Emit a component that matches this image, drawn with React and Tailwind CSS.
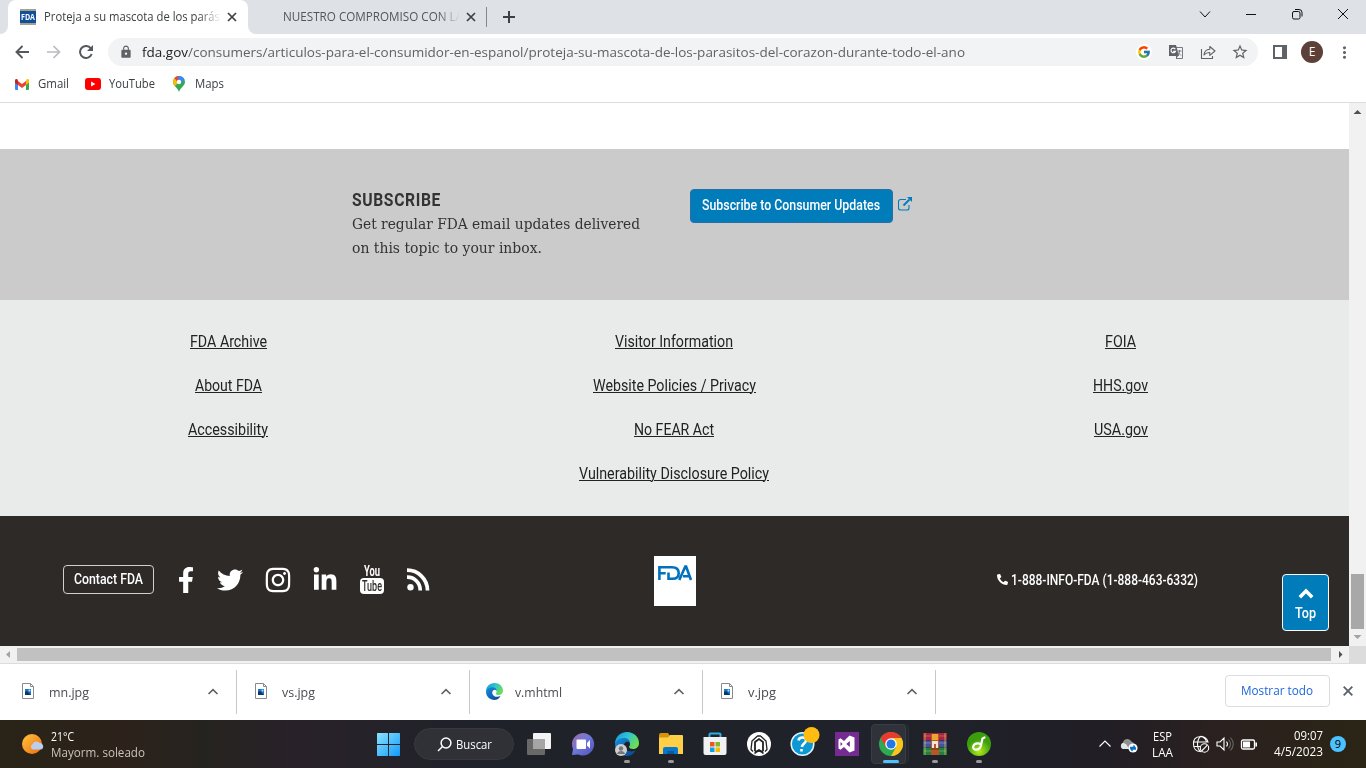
import React, { useLayoutEffect, useRef } from "react";
import { FaFacebookF, FaTwitter, FaInstagram, FaLinkedinIn, FaPhoneAlt } from "react-icons/fa";
import { MdLock, MdStarBorder, MdMoreVert } from "react-icons/md";
import { FcGoogle } from "react-icons/fc";

/* Single line of text squeezed or stretched to an exact width. */
function Fit({ w, className = "", textClass = "", children }) {
  const inner = useRef(null);
  useLayoutEffect(() => {
    const el = inner.current;
    el.style.transform = "none";
    const natural = el.getBoundingClientRect().width;
    if (natural) el.style.transform = `scaleX(${w / natural})`;
  }, [w, children]);
  return (
    <span className={`block shrink-0 whitespace-nowrap ${className}`} style={{ width: w }}>
      <span ref={inner} className={`inline-block origin-left ${textClass}`}>{children}</span>
    </span>
  );
}

function Cross({ className }) {
  return (
    <svg className={`h-[10px] w-[10px] shrink-0 ${className}`} viewBox="0 0 10 10" stroke="#3c4043" strokeWidth="1.700">
      <path d="M1 1l8 8M9 1L1 9" />
    </svg>
  );
}

function Tabs() {
  return (
    <div className="flex h-[34px] items-stretch bg-[#dee1e6] pl-2 text-[#3c4043]">
      <div className="relative flex w-[240px] items-center rounded-t-lg bg-white pl-3">
        <svg className="absolute bottom-0 -left-2" width="8" height="8"><path d="M8 0v8H0a8 8 0 0 0 8-8z" fill="#fff" /></svg>
        <svg className="absolute -right-2 bottom-0" width="8" height="8"><path d="M0 0v8h8a8 8 0 0 1-8-8z" fill="#fff" /></svg>
        <div className="flex h-4 w-4 flex-col items-center justify-center border-t-2 border-b-2 border-[#a5a28c] bg-[#10509b] text-[8px] leading-none font-bold text-white">
          <Fit w={14}>FDA</Fit>
        </div>
        <div className="ml-2 w-[177px] overflow-hidden [mask-image:linear-gradient(to_right,#000_155px,transparent_177px)]">
          <Fit w={176} className="text-[12px] leading-5">Proteja a su mascota de los parás</Fit>
        </div>
        <Cross className="ml-1.5" />
      </div>
      <div className="flex w-[238px] items-center pl-[35px]">
        <div className="w-[182px] [mask-image:linear-gradient(to_right,#000_155px,transparent_177px)]">
          <Fit w={180} className="text-[12px] leading-5 text-[#54555c]">NUESTRO COMPROMISO CON LA</Fit>
        </div>
        <Cross className="ml-px" />
      </div>
      <div className="mt-[7px] h-5 w-px bg-[#85888d]" />
      <svg className="mt-[11px] ml-4" width="12" height="12" viewBox="0 0 12 12" stroke="#3c4043" strokeWidth="2"><path d="M6 0v12M0 6h12" /></svg>
      <svg className="ml-auto h-[34px] w-[176px] shrink-0" viewBox="1190 0 176 34" fill="none" stroke="#111" strokeWidth="1">
        <path d="M1200 11.5l5 5.5 5-5.500" />
        <path d="M1246 14.500h10" />
        <rect x="1292.500" y="11.500" width="7.500" height="7.500" rx="1.500" />
        <path d="M1295 9.500h4a3 3 0 0 1 3 3v4" />
        <path d="M1338 9l10 10M1348 9l-10 10" />
      </svg>
    </div>
  );
}

function Toolbar() {
  return (
    <div className="flex h-9 items-center bg-white pl-[15px] text-[#5f6368]">
      <svg width="14" height="14" viewBox="0 0 14 14" fill="none" stroke="#55595e" strokeWidth="1.900"><path d="M14 7H1.500M7.500 1L1.500 7l6 6" /></svg>
      <svg className="ml-[18px]" width="14" height="14" viewBox="0 0 14 14" fill="none" stroke="#b9bbbe" strokeWidth="1.700"><path d="M0 7h12.500M6.500 1l6 6-6 6" /></svg>
      <svg className="ml-[18px]" width="14" height="14" viewBox="0 0 14 14"><path d="M11.800 3.300A6 6 0 1 0 12.700 9" fill="none" stroke="#55595e" strokeWidth="2" /><path d="M14 0v6H8z" fill="#55595e" /></svg>
      <div className="ml-[15px] flex h-7 w-[1150px] items-center rounded-full bg-[#f1f3f4] pl-[11px] text-[13.5px]">
        <MdLock className="mr-[9px] h-[14px] w-[14px]" />
        <Fit w={46} className="leading-7 text-[#202124]">fda.gov</Fit>
        <Fit w={777} className="leading-7">/consumers/articulos-para-el-consumidor-en-espanol/proteja-su-mascota-de-los-parasitos-del-corazon-durante-todo-el-ano</Fit>
        <div className="ml-[171px] flex h-4 w-4 items-center justify-center rounded-full bg-white"><FcGoogle className="h-[14px] w-[14px]" /></div>
        <svg className="ml-4 h-4 w-4" viewBox="0 0 16 16">
          <path d="M5 3.500h9.500v11H8" fill="none" stroke="#777b80" />
          <path d="M1 1h7l3 11H1z" fill="#5f6368" />
          <path d="M7.300 5.200a2.300 2.300 0 1 0 .1 2.200H5.200" fill="none" stroke="#fff" strokeWidth="1.100" />
          <path d="M9.500 7h4M11.500 6v1c0 2-1 3.500-2 4.500M10 8.500l3 3" fill="none" stroke="#777b80" />
          <path d="M8 12h2l-2 3z" fill="#5f6368" />
        </svg>
        <svg className="ml-4 h-4 w-4" viewBox="0 0 16 16" fill="none" stroke="#5f6368" strokeWidth="1.100">
          <path d="M1.500 5v9.500h11V12" /><path d="M4 11c.4-3.800 2.500-5.600 5.800-5.700V2.500L15 7l-5.200 4.300V8.500C7.200 8.400 5.500 9.200 4 11z" strokeLinejoin="round" />
        </svg>
        <MdStarBorder className="ml-[15px] h-[18px] w-[18px]" />
      </div>
      <svg className="ml-[15px] h-[14px] w-[14px]" viewBox="0 0 14 14"><path d="M0 0h14v14H0zM2 2v10h7V2z" fill="#5f6368" fillRule="evenodd" /></svg>
      <div className="ml-[14px] flex h-[22px] w-[22px] items-center justify-center rounded-full bg-[#5d4037] text-[12px] text-white">E</div>
      <MdMoreVert className="ml-3 h-[19px] w-[19px]" />
    </div>
  );
}

function Bookmarks() {
  return (
    <div className="flex h-[33px] items-center border-b border-[#dadce0] bg-white pb-1 pl-[15px] text-[12px] text-[#3c4043]">
      <svg width="14" height="11" viewBox="0 0 14 11">
        <path d="M0 1.500V10q0 1 1 1h2V5z" fill="#4285f4" /><path d="M11 5v6h2q1 0 1-1V1.500z" fill="#34a853" />
        <path d="M11 2v4l3-2.300V1.500C14 0 12.500-.5 11.500.4z" fill="#fbbc04" /><path d="M3 2v4l4 3 4-3V2L7 5z" fill="#ea4335" />
        <path d="M0 1.500v2.200L3 6V2L2.500.4C1.500-.5 0 0 0 1.500z" fill="#c5221f" />
      </svg>
      <Fit w={31} className="ml-[9px]">Gmail</Fit>
      <svg className="ml-[16px]" width="16" height="12" viewBox="0 0 17 12" preserveAspectRatio="none"><rect width="17" height="12" rx="3" fill="#f00" /><path d="M6.500 3.500v5l4.500-2.500z" fill="#fff" /></svg>
      <Fit w={46} className="ml-2">YouTube</Fit>
      <svg className="ml-[18px]" width="12" height="16" viewBox="0 0 12 16">
        <path d="M6 0a6 6 0 0 1 6 6c0 4-4.500 5-6 10C4.500 11 0 10 0 6a6 6 0 0 1 6-6z" fill="#34a853" />
        <path d="M0 6q0-2 1.400-3.900L6 6 2 10Q0 8 0 6z" fill="#fbbc04" />
        <path d="M1.400 2.100A6 6 0 0 1 6 0v3L3.800 5z" fill="#ea4335" /><path d="M6 0a6 6 0 0 1 5.500 3.500L8 7 4.500 3z" fill="#4285f4" /><circle cx="6" cy="6" r="2.200" fill="#fff" />
      </svg>
      <Fit w={29} className="ml-[10px]">Maps</Fit>
    </div>
  );
}

const LINKS = [
  [["FDA Archive", 77], ["About FDA", 67], ["Accessibility", 80]],
  [["Visitor Information", 118], ["Website Policies / Privacy", 163], ["No FEAR Act", 80], ["Vulnerability Disclosure Policy", 190]],
  [["FOIA", 31], ["HHS.gov", 55], ["USA.gov", 54]],
];

function Page() {
  return (
    <div className="relative flex w-[1349px] flex-col font-['Roboto',sans-serif]">
      <div className="h-[46px] bg-white" />
      <section className="flex h-[151px] bg-[#cbcbcb] pt-[39px] pl-[352px] text-[#333]">
        <div className="w-[338px]">
          <Fit w={89} className="h-6 text-[18px] leading-6 font-bold" textClass="tracking-[.04em]">SUBSCRIBE</Fit>
          <Fit w={288} className="h-6 font-['DejaVu_Serif',serif] text-[15.5px] leading-6">Get regular FDA email updates delivered</Fit>
          <Fit w={190} className="h-6 font-['DejaVu_Serif',serif] text-[15.5px] leading-6">on this topic to your inbox.</Fit>
        </div>
        <div className="mt-px flex h-[34px] w-[203px] items-center rounded-[4px] border border-[#2a6ea6] bg-[#007cba] pb-px pl-[11px] text-[14px] font-medium text-white">
          <Fit w={178}>Subscribe to Consumer Updates</Fit>
        </div>
        <svg className="mt-[9px] ml-[5px] h-[14px] w-[14px]" viewBox="0 0 14 14" fill="none" stroke="#007cba" strokeWidth="1.100">
          <path d="M8 2.500H2.500a2 2 0 0 0-2 2v6.500a2 2 0 0 0 2 2H9a2 2 0 0 0 2-2V8" /><path d="M5.500 8.500l6-6" strokeWidth="1.800" /><path d="M9 0h5v5z" fill="#007cba" stroke="none" />
        </svg>
      </section>
      <nav className="grid h-[216px] grid-cols-3 bg-[#e9ebeb] px-[5px] pt-[30px] text-[16px] text-[#222]">
        {LINKS.map((col, i) => (
          <div key={i} className="flex flex-col items-center gap-5">
            {col.map(([t, w]) => <Fit key={t} w={w} className="h-6 leading-6" textClass="underline decoration-1 underline-offset-1">{t}</Fit>)}
          </div>
        ))}
      </nav>
      <footer className="flex h-[130px] items-center bg-[#2e2a28] pl-[63px] text-white">
        <div className="-mt-[3px] flex w-[591px] items-center">
          <div className="flex h-[29px] w-[91px] items-center justify-center rounded-[4px] border border-[#d0d0d0] text-[14px] font-medium"><Fit w={69}>Contact FDA</Fit></div>
          <FaFacebookF className="ml-[19px] h-[26px] w-[26px]" />
          <FaTwitter className="ml-[18px] h-[26px] w-[26px]" />
          <FaInstagram className="ml-[21px] h-[28px] w-[28px]" />
          <FaLinkedinIn className="ml-[20px] h-[26px] w-[26px]" />
          <div className="ml-[22px] flex h-[29px] w-6 flex-col items-center font-bold">
            <Fit w={16} className="h-[13px] text-[15px] leading-[12px]">You</Fit>
            <div className="flex h-4 w-6 items-center justify-center rounded-[4px] bg-white font-medium text-[#2e2a28]"><Fit w={20} className="text-[14px] leading-4">Tube</Fit></div>
          </div>
          <svg className="ml-[23px]" width="23" height="23" viewBox="0 0 23 23" fill="none" stroke="#fff" strokeWidth="3.700"><circle cx="3.500" cy="19.300" r="3.200" fill="#fff" stroke="none" /><path d="M0 9.200A12.800 12.800 0 0 1 13.200 22.500M0 2.200A20.300 20.300 0 0 1 20.500 22.500" /></svg>
        </div>
        <svg className="h-[50px] w-[42px] bg-white" viewBox="0 0 42 50" fill="none" stroke="#0071bc" strokeWidth="2.600">
          <path d="M5.400 24V11.300H18c5 0 6.700 2.400 6.700 5.900S23 22.800 18.500 22.800h-4v-6.300M5.400 17.200h6.300M25.300 24l6-13.500h.8l4.900 13.500M29 20.200h6" />
        </svg>
        <FaPhoneAlt className="-mt-1 ml-[301px] h-[11px] w-[11px] -scale-x-100 rotate-90" />
        <Fit w={187} className="-mt-[2px] ml-[3px] text-[14px] font-medium">1-888-INFO-FDA (1-888-463-6332)</Fit>
      </footer>
      <button className="absolute top-[471px] left-[1282px] flex h-[57px] w-[47px] flex-col items-center rounded-[4px] border border-white bg-[#007cba] pt-[13px] text-white">
        <svg width="16" height="11" viewBox="0 0 16 11" fill="none" stroke="#fff" strokeWidth="3.500"><path d="M1.800 9.200L8 3l6.200 6.200" /></svg>
        <Fit w={21} className="mt-1 text-[14px] leading-5 font-medium">Top</Fit>
      </button>
    </div>
  );
}

function ShelfItem({ name, w, edge }) {
  return (
    <div className="my-1.5 flex w-[233px] items-center border-r border-[#c8c8c8] first:w-[237px] first:pl-1">
      <div className="ml-[15px] flex w-[18px] items-center justify-center pb-0.5">
        {edge ? <EdgeIcon size={17} /> : (
          <svg width="12" height="16" viewBox="0 0 12 16"><path d="M.5.500h8l3 3v12H.5z" fill="#fff" stroke="#8a8a8a" /><path d="M8.500.500v3h3" fill="none" stroke="#8a8a8a" /><rect x="3" y="6" width="6" height="6" fill="#1976c9" /><path d="M3 12V9l2-1 4 4z" fill="#0b3763" /><circle cx="7.500" cy="7.500" r="1" fill="#c2e6ff" /></svg>
        )}
      </div>
      <Fit w={w} className="ml-3 pt-px text-[13px] text-[#4b4b52]">{name}</Fit>
      <svg className="mr-[17px] ml-auto" width="12" height="8" viewBox="0 0 12 8" fill="none" stroke="#5f6368" strokeWidth="1.700"><path d="M1.500 6L6 1.700 10.500 6" /></svg>
    </div>
  );
}

function EdgeIcon({ size, person }) {
  return (
    <svg width={size} height={size} viewBox="0 0 24 24">
      <defs>
        <linearGradient id="edgeTop" x1="0" y1="0" x2="1" y2=".5"><stop stopColor="#168fdd" /><stop offset=".5" stopColor="#2cc3d4" /><stop offset="1" stopColor="#6cdd55" /></linearGradient>
        <linearGradient id="edgeBase" x1="0" y1="0" x2="1" y2="1"><stop stopColor="#168fdd" /><stop offset="1" stopColor="#07458f" /></linearGradient>
      </defs>
      <path d="M0 12C0 5 5 0 12 0s12 5 12 11c0 4-3 6-6 6-2 0-4-.8-4-2 0-.8 1-1 1-3 0-2.500-2.500-4-6-4S1 10 0 12z" fill="url(#edgeTop)" />
      <path d="M0 12c1-4 5-6 9-6 3.500 0 6 2 6 5-1-1.500-3-1.500-4-1-2 1-2.500 3-2 5 1 4 6 5.500 11.500 3.500C18 23 15 24 12 24 5 24 0 19 0 12z" fill="url(#edgeBase)" />
      {person && <g><circle cx="6" cy="18" r="6" fill="#d0d0d0" /><circle cx="6" cy="16.500" r="2.200" fill="#777" /><path d="M2 22c.5-4 7.500-4 8 0z" fill="#777" /></g>}
    </svg>
  );
}

function App24({ children, running }) {
  return (
    <div className="relative flex h-12 w-11 items-center justify-center">
      {children}
      {running && <div className="absolute bottom-[5px] h-[3px] w-1.5 rounded-full bg-[#999]" />}
    </div>
  );
}

function Taskbar() {
  return (
    <div className="flex h-12 items-center bg-[linear-gradient(to_right,#292417_0%,#2c221b_9%,#25231f_15%,#28212a_22%,#202229_34%,#1f222a_65%,#211e26_80%,#2b211f_90%,#2a2515_100%)] pl-[21px] text-white">
      <svg width="24" height="24" viewBox="0 0 24 24">
        <defs><linearGradient id="sun" x1="0" y1="0" x2="1" y2="1"><stop stopColor="#ffc83d" /><stop offset="1" stopColor="#ee6a12" /></linearGradient></defs>
        <circle cx="11" cy="12" r="10" fill="url(#sun)" /><path d="M12 17.500a3 3 0 0 1-.3-5.600 4 4 0 0 1 7-.8A3.300 3.300 0 0 1 20 17.500z" fill="#bccdf2" />
      </svg>
      <div className="ml-[6px] w-[326px] pt-px text-[12px] leading-4">
        <Fit w={23} className="h-4">21°C</Fit>
        <Fit w={94} className="h-4 text-[#c7c3be]">Mayorm. soleado</Fit>
      </div>
      <svg className="-ml-px h-6 w-6" viewBox="0 0 24 24">
        <defs><linearGradient id="win" x1="0" y1="0" x2="1" y2="1"><stop stopColor="#8be3ff" /><stop offset="1" stopColor="#119af8" /></linearGradient></defs>
        <path d="M1.500 1H12v11H1V1.500zM13 1h10.500l.5.500V12H13zM1 13h11v11H1.500l-.5-.5zM13 13h11v10.500l-.5.500H13z" fill="url(#win)" />
      </svg>
      <div className="ml-[14px] flex h-8 w-[100px] items-center rounded-full border border-[#38383e] bg-[#303037] pl-[22px]">
        <svg width="15" height="15" viewBox="0 0 15 15" fill="none" stroke="#fff" strokeWidth="1.500"><circle cx="9" cy="6" r="4.900" /><path d="M5.500 9.500L1 14" /></svg>
        <Fit w={36} className="ml-1 pt-px text-[12px] font-medium">Buscar</Fit>
      </div>
      <div className="ml-[3px] flex">
        <App24>
          <svg width="24" height="24" viewBox="0 0 24 24"><rect x="6" y="1" width="18" height="16" rx="1" fill="#f3f3f3" /><rect x="0" y="7" width="18" height="16" rx="1" fill="#686868" /><rect x="6" y="7" width="12" height="10" fill="#a5a5a5" /></svg>
        </App24>
        <App24>
          <svg width="24" height="24" viewBox="0 0 24 24"><defs><linearGradient id="chat" x1="0" y1="0" x2="1" y2="1"><stop stopColor="#a66aa0" /><stop offset=".45" stopColor="#7078da" /><stop offset="1" stopColor="#4f50bd" /></linearGradient></defs><path d="M12 1a11.300 11.300 0 1 1-5 21.500L1 23l1-6A11.300 11.300 0 0 1 12 1z" fill="url(#chat)" /><rect x="5.500" y="7.500" width="9.500" height="9.500" rx="1" fill="#fff" /><path d="M16 11l3-3v8.500l-3-3z" fill="#fff" /></svg>
        </App24>
        <App24 running><EdgeIcon size={24} person /></App24>
        <App24 running>
          <svg width="24" height="22" viewBox="0 0 24 22"><path d="M0 2q0-2 2-2h7l2 3v5H0z" fill="#d99209" /><path d="M0 4.500h9L11 2h12q1 0 1 1v18H0z" fill="#ffcf48" /><path d="M4 21v-5q0-2 2-2h11q2 0 2 2v5z" fill="#0878cf" /><path d="M8 21v-3h7v3z" fill="#075aa2" /></svg>
        </App24>
        <App24>
          <svg width="24" height="24" viewBox="0 0 24 24"><path d="M6.500 6V2.500q0-1 1-1h9q1 0 1 1V6" fill="none" stroke="#29aee6" strokeWidth="2" /><path d="M.5 5h23v16q0 2-2 2h-19q-2 0-2-2z" fill="#f1f1f1" /><path d="M7 10h4.500v4.500H7z" fill="#f15325" /><path d="M12.500 10H17v4.500h-4.500z" fill="#7db92f" /><path d="M7 15.500h4.500V20H7z" fill="#119ee6" /><path d="M12.500 15.500H17V20h-4.500z" fill="#fbb900" /></svg>
        </App24>
        <App24>
          <svg width="24" height="24" viewBox="0 0 24 24"><circle cx="12" cy="12" r="12" fill="#fff" /><path d="M6 19.500l-2-2L5 9l5.500-5h3L19 9l1 8.500-2 2" fill="none" stroke="#222" strokeWidth="1.300" strokeLinejoin="round" /><path d="M8 19V10l4-3 4 3v9" fill="none" stroke="#222" strokeWidth="1.800" /><path d="M7.500 22.500v-3L12 17l4.500 2.500v3L14 20.500l-2-.8-2 .8z" fill="#222" /></svg>
        </App24>
        <App24>
          <svg width="30" height="30" viewBox="0 0 30 30" className="-mt-1 ml-1"><circle cx="12.500" cy="17" r="11.300" fill="#0c98d5" stroke="#e7f5fa" strokeWidth="1.500" /><path d="M8.500 13.500c.5-4 8-4 7.500 0-.2 3-4 3-4 6.500M11.500 22v2.500" fill="none" stroke="#fff" strokeWidth="2.600" /><circle cx="21.500" cy="8" r="8" fill="#ffbd13" /></svg>
        </App24>
        <App24>
          <svg width="24" height="24" viewBox="0 0 24 24"><path d="M0 0h24v24H0z" fill="#742c91" /><path d="M14.500 3.500l5 2v13l-5 2-5.500-5.500-3.500 2.700L3.500 16.500v-9l2-1.200L9 9zM14.800 9l-3.500 3 3.500 3zM5.500 10v4l2-2z" fill="#fff" fillRule="evenodd" /></svg>
        </App24>
        <div className="relative flex h-12 w-11 items-center justify-center">
          <div className="absolute top-1 left-4 h-10 w-6 rounded border border-[#2c2e36] bg-[#25272f]" />
          <div className="absolute top-1 left-0.5 h-10 w-[35px] rounded border border-[#3c3d43] bg-[#303239]" />
          <svg className="relative" width="24" height="24" viewBox="0 0 24 24"><circle cx="12" cy="12" r="12" fill="#2da94f" /><path d="M1.600 6A12 12 0 0 1 22.400 6H12l-5.200 9z" fill="#e93b2d" /><path d="M22.400 6A12 12 0 0 1 12 24l5.200-9L12 6z" fill="#fdc51b" /><circle cx="12" cy="12" r="5.800" fill="#fff" /><circle cx="12" cy="12" r="4.500" fill="#2378e8" /></svg>
          <div className="absolute bottom-[5px] h-[3px] w-4 rounded-full bg-[#4cc2ff]" />
        </div>
        <App24 running>
          <svg width="24" height="22" viewBox="0 0 24 22"><rect y="0" width="24" height="7" fill="#aa253c" /><rect y="7.500" width="24" height="6.500" fill="#4751a4" /><rect y="14.500" width="24" height="7.500" fill="#21813c" /><path d="M2 0v22M22 0v22" stroke="#d3b454" strokeWidth=".8" /><path d="M1 3h22M1 10h22M1 18h22" stroke="#fff" strokeOpacity=".25" /><path d="M8 1h8v21H8z" fill="#b85624" /><path d="M9 1h6v6H9z" fill="#eca52e" /><path d="M9 8h6v7h-2v-4h-2v4H9z" fill="#ece5d8" /><path d="M8 16h8" stroke="#632e16" /></svg>
        </App24>
        <App24 running>
          <svg width="24" height="24" viewBox="0 0 24 24"><defs><radialGradient id="lime" cx=".5" cy=".8"><stop stopColor="#b5ed1e" /><stop offset="1" stopColor="#3b9d0c" /></radialGradient></defs><circle cx="12" cy="12" r="12" fill="url(#lime)" /><path d="M17.500 5.500l-2 1-1.700 7.500c-.6 2.200-2.200 3.600-4.600 3.600-2.200 0-3.400-1.300-3-3 .5-2 2.700-3.200 4.700-3.200 1.800 0 2.800.8 3 1.800" fill="none" stroke="#fff" strokeWidth="2.200" strokeLinecap="round" strokeLinejoin="round" /></svg>
        </App24>
      </div>
      <svg className="ml-[97px] shrink-0" width="40" height="18" viewBox="0 0 40 18"><path d="M1.500 11.500L7 6l5.500 5.500" fill="none" stroke="#fff" strokeWidth="1.200" /><path d="M25 14a3.300 3.300 0 0 1 0-6.200 4.500 4.500 0 0 1 8.500-1.300A3.500 3.500 0 0 1 36 10v4z" fill="#8f8f8f" /><path d="M25 14a3.300 3.300 0 0 1 0-6.200q3 0 6 6.200z" fill="#e4e4e4" /><circle cx="35" cy="13" r="4.600" fill="#fff" /><path d="M32 12.500h5l-1.500-2M38 14h-5l1.500 2" fill="none" stroke="#0872c7" strokeWidth="1.300" /></svg>
      <div className="ml-[13px] flex w-[22px] shrink-0 flex-col items-center pt-px text-[12px] leading-4"><Fit w={19} className="h-4">ESP</Fit><Fit w={21} className="h-4">LAA</Fit></div>
      <svg className="ml-[18px] shrink-0" width="68" height="20" viewBox="0 0 68 20" fill="none" stroke="#fff" strokeWidth="1.100">
        <path d="M10.500 18c-2-1-4-4-4-8s2-7 3-7.500S15 4 15.500 8M2.500 10q-.5-7 7-7.500 6 0 7.500 5.500H3M3 12.500h6M2.500 10c0 5 3 7.500 6.500 7.500" /><circle cx="13.500" cy="14" r="4.200" /><path d="M10.600 17l5.800-5.800" />
        <path d="M26 8v4h3l4 4V4l-4 4zM35.500 7.500q2 2.500 0 5" /><path d="M37.500 5.500q4 4.500 0 9M39.500 3.500q5.500 6.500 0 13" stroke="#666" />
        <rect x="50.500" y="6" width="13" height="9" rx="1.500" strokeWidth="1.300" /><path d="M52.500 8h6v5h-6z" fill="#fff" /><path d="M65.200 8.500v4" strokeWidth="1.600" />
      </svg>
      <div className="ml-[14px] flex w-[50px] shrink-0 flex-col items-end text-[12px] leading-4"><Fit w={29} className="h-4">09:07</Fit><Fit w={49} className="h-4">4/5/2023</Fit></div>
      <div className="ml-[7px] flex h-4 w-4 shrink-0 items-center justify-center rounded-full bg-[#4cc2ff] text-[11px] text-black">9</div>
    </div>
  );
}

export default function App() {
  return (
    <div className="h-[768px] w-[1366px] overflow-hidden bg-white font-['Open_Sans',sans-serif]">
      <Tabs />
      <Toolbar />
      <Bookmarks />
      <div className="flex h-[543px]">
        <Page />
        <div className="flex w-[17px] flex-col items-center bg-[#f1f1f1]">
          <svg width="17" height="17"><path d="M4.500 11h8L8.500 7z" fill="#505050" /></svg>
          <div className="mt-[454px] h-[55px] w-[13px] bg-[#a8a8a8]" />
          <svg width="17" height="17"><path d="M4.500 6h8l-4 4z" fill="#a3a3a3" /></svg>
        </div>
      </div>
      <div className="flex h-[18px] border-b border-[#dadce0] bg-[#f1f1f1]">
        <svg width="17" height="17"><path d="M10 5v7L6 8.500z" fill="#a3a3a3" /></svg>
        <div className="mt-[2px] h-[13px] w-[1314px] bg-[#c1c1c1]" />
        <svg width="18" height="17"><path d="M8 5v7l3.500-3.500z" fill="#505050" /></svg>
        <div className="w-[17px] bg-[#dcdcdc]" />
      </div>
      <div className="flex h-14 bg-white">
        <ShelfItem name="mn.jpg" w={40} />
        <ShelfItem name="vs.jpg" w={33} />
        <ShelfItem name="v.mhtml" w={47} edge />
        <ShelfItem name="v.jpg" w={28} />
        <div className="mt-[11px] ml-[289px] flex h-8 w-[105px] items-center rounded-[4px] border border-[#dadce0] pl-[15px] text-[12px] font-medium text-[#1a66dc]"><Fit w={72}>Mostrar todo</Fit></div>
        <svg className="mt-[22px] ml-[13px]" width="10" height="10" viewBox="0 0 10 10" stroke="#5f6368" strokeWidth="1.900"><path d="M.7.700l8.600 8.600M9.300.700L.7 9.300" /></svg>
      </div>
      <Taskbar />
    </div>
  );
}
